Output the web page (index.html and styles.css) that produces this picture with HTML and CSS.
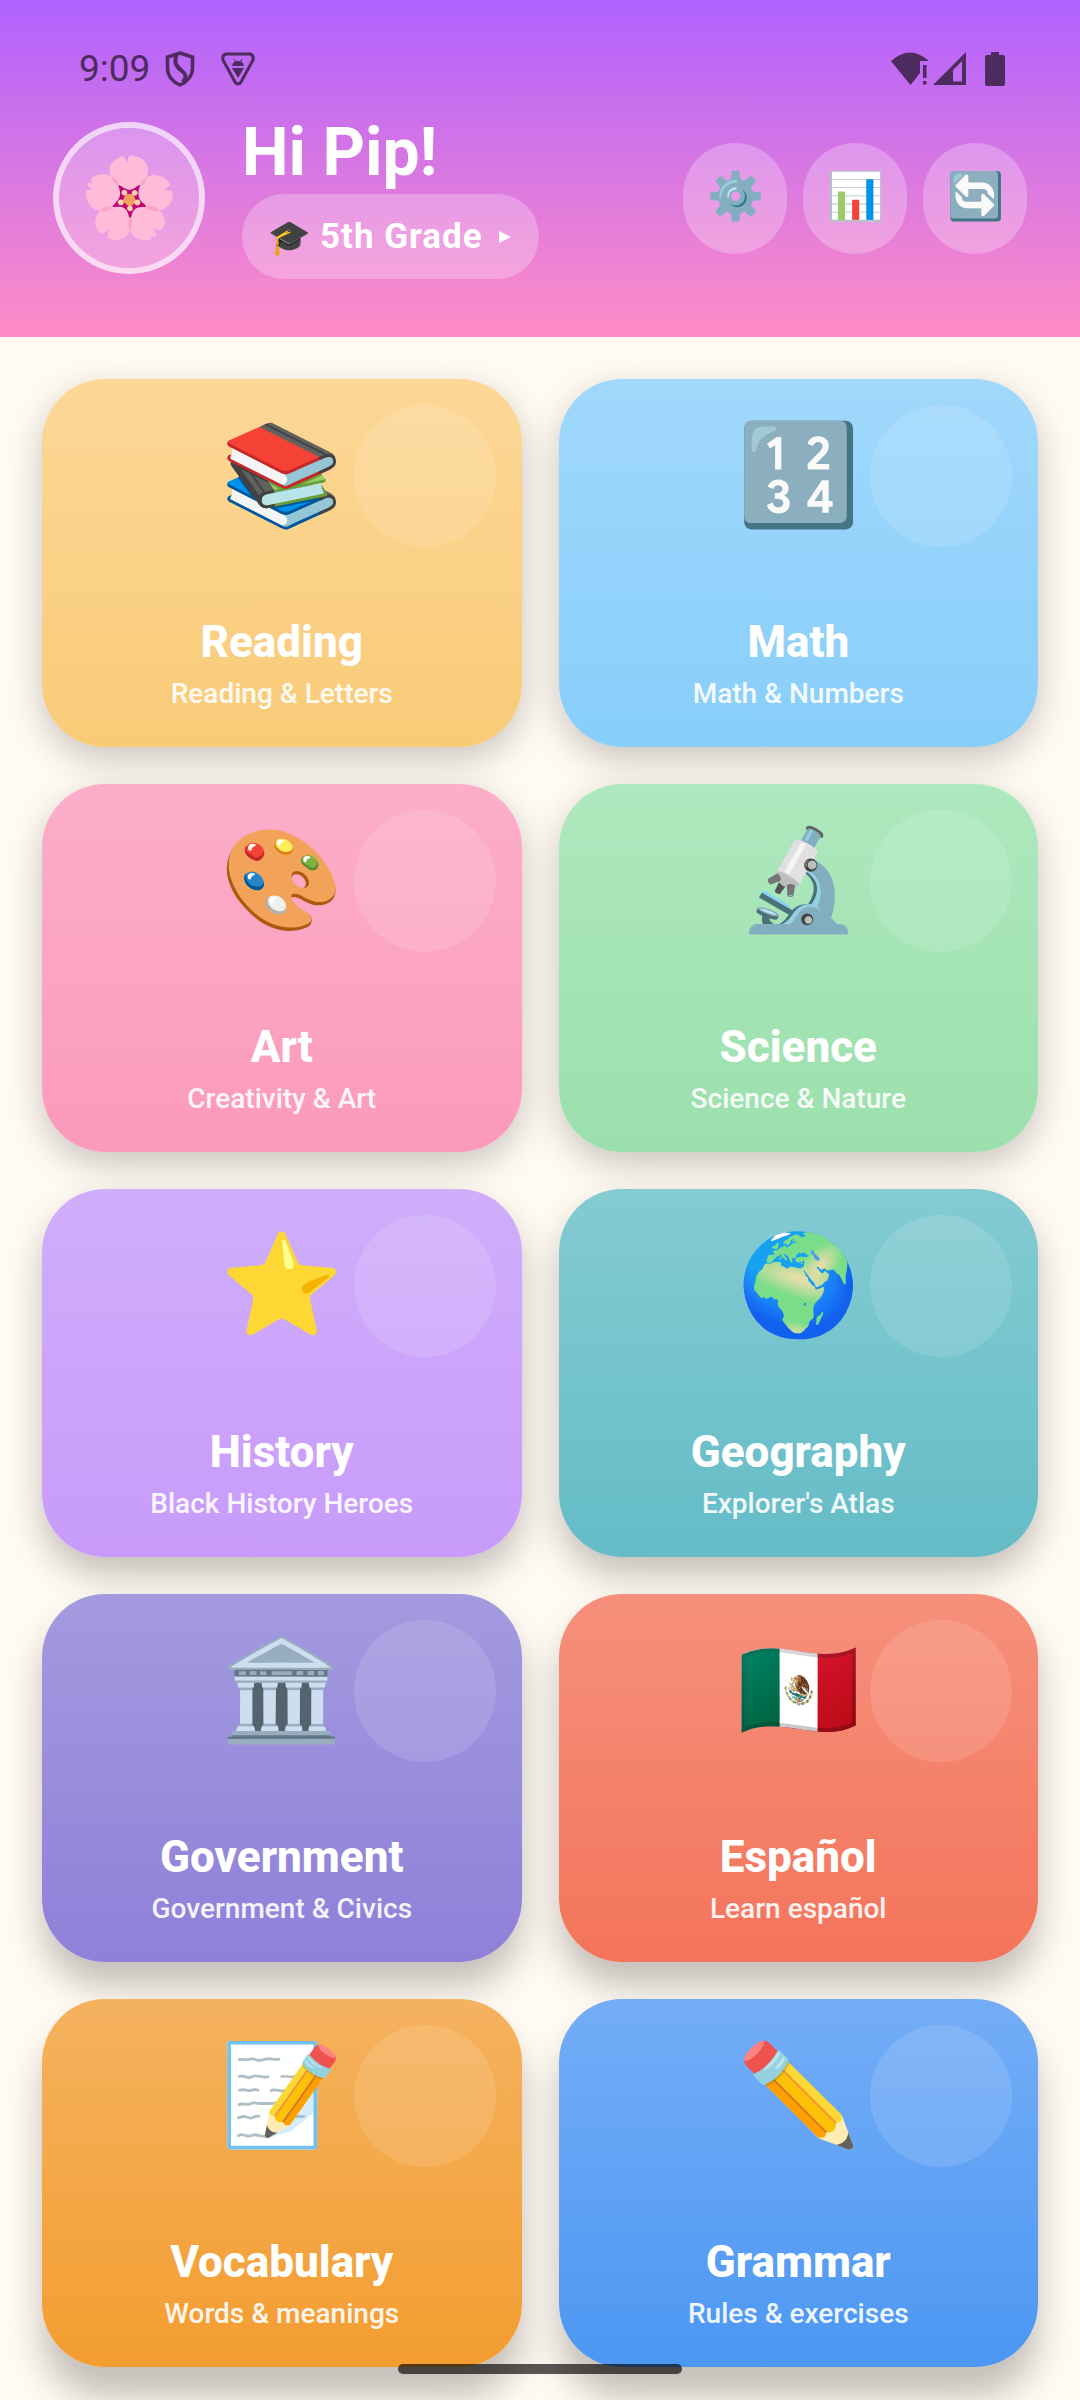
FILE: index.html
```
<!DOCTYPE html>
<html lang="en">
  <head>
    <meta charset="utf-8">
    <title>Learning Home</title>
    <link rel="stylesheet" href="styles.css">
  </head>
  <body>
    <header class="header">
      <div class="status-bar">
        <span class="clock">9:09</span>
        <svg class="shield" viewBox="0 0 30 36"><path d="M15 2 L27.500 6 V17 C27.500 25 22 31 15 34 C8 31 2.500 25 2.500 17 V6 Z" fill="none" stroke="currentColor" stroke-width="3.500"/><path d="M12 3 C8 12 12 16 17 20 C21 23 22 26 18 31" fill="none" stroke="currentColor" stroke-width="4"/></svg>
        <svg class="triangle" viewBox="0 0 34 34"><path d="M5 2 H29 Q33 3 32 8 L20 30 Q17 34 14 30 L2 8 Q1 3 5 2 Z" fill="none" stroke="currentColor" stroke-width="3"/><path d="M11 14 Q12 9 17 9 Q22 9 23 14 Z M11 16 H23 L17 26 Z" fill="currentColor"/><path d="M13 7 L14.500 10 M21 7 L19.500 10" stroke="currentColor"/></svg>
        <div class="status-right">
          <svg class="wifi" viewBox="0 0 38 34"><path d="M0 9 Q19 -8 38 9 H29 V21 L19.500 33 Z" fill="currentColor"/><path d="M32 13 H35.500 V26 H32 Z M32 29 H35.500 V32.500 H32 Z" fill="currentColor"/></svg>
          <svg class="signal" viewBox="0 0 34 34"><path d="M33 0 V33 H0 Z M29 9 L20 18 V29.500 H29 Z" fill="currentColor" fill-rule="evenodd"/></svg>
          <svg class="battery" viewBox="0 0 20 34"><path d="M6 0 H14 V3 H18 Q20 3 20 5 V32 Q20 34 18 34 H2 Q0 34 0 32 V5 Q0 3 2 3 H6 Z" fill="currentColor"/></svg>
        </div>
      </div>

      <div class="profile">
        <button class="avatar" aria-label="Avatar">🌸</button>
        <div class="greeting">
          <h1 class="hello">Hi Pip!</h1>
          <button class="grade-button"><span class="cap">🎓</span>5th Grade<span class="arrow"></span></button>
        </div>
        <div class="actions">
          <button class="round-button" aria-label="Settings">⚙️</button>
          <button class="round-button" aria-label="Progress">📊</button>
          <button class="round-button" aria-label="Switch">🔄</button>
        </div>
      </div>
    </header>

    <main class="subjects">
      <button class="card reading"><span class="icon">📚</span><span class="name">Reading</span><span class="about">Reading &amp; Letters</span></button>
      <button class="card math"><span class="icon">🔢</span><span class="name">Math</span><span class="about">Math &amp; Numbers</span></button>
      <button class="card art"><span class="icon">🎨</span><span class="name">Art</span><span class="about">Creativity &amp; Art</span></button>
      <button class="card science"><span class="icon">🔬</span><span class="name">Science</span><span class="about">Science &amp; Nature</span></button>
      <button class="card history"><span class="icon">⭐</span><span class="name">History</span><span class="about">Black History Heroes</span></button>
      <button class="card geography"><span class="icon">🌍</span><span class="name">Geography</span><span class="about">Explorer's Atlas</span></button>
      <button class="card government"><span class="icon">🏛️</span><span class="name">Government</span><span class="about">Government &amp; Civics</span></button>
      <button class="card spanish"><span class="icon">🇲🇽</span><span class="name">Español</span><span class="about">Learn español</span></button>
      <button class="card vocabulary"><span class="icon">📝</span><span class="name">Vocabulary</span><span class="about">Words &amp; meanings</span></button>
      <button class="card grammar"><span class="icon">✏️</span><span class="name">Grammar</span><span class="about">Rules &amp; exercises</span></button>
    </main>

    <div class="home-bar"></div>
  </body>
</html>
```
FILE: styles.css
```
* {
  box-sizing: border-box;
}

body {
  margin: 0;
  background-color: #fffaf2;
  color: white;
  font-family: Roboto, sans-serif;
}

button {
  border: none;
  padding: 0;
  color: white;
  font-family: inherit;
  cursor: pointer;
}

.header {
  padding: 0 53px 58px;
  background: linear-gradient(#b062ff, #ff8cc6);
}

.status-bar {
  display: flex;
  align-items: center;
  height: 117px;
  padding: 38px 22px 18px 26px;
  color: #4d2b5e;
}

.clock {
  font-size: 37px;
}

.shield {
  width: 30px;
  height: 36px;
  margin-left: 15px;
}

.triangle {
  width: 34px;
  height: 34px;
  margin-left: 26px;
}

.status-right {
  display: flex;
  margin-left: auto;
}

.wifi {
  width: 38px;
  height: 34px;
}

.signal {
  width: 34px;
  height: 34px;
  margin: 0 18px 0 4px;
}

.battery {
  width: 20px;
  height: 34px;
}

.profile {
  display: flex;
  align-items: center;
}

.avatar {
  display: flex;
  align-items: center;
  justify-content: center;
  width: 152px;
  height: 152px;
  border: 6px solid rgba(255, 255, 255, 0.7);
  border-radius: 50%;
  background: rgba(255, 255, 255, 0.25);
  background-clip: padding-box;
  font-size: 79px;
}

.greeting {
  margin-left: 37px;
}

.hello {
  margin: 0 0 5px;
  font-size: 66px;
  line-height: 72px;
}

.grade-button {
  display: flex;
  align-items: center;
  height: 85px;
  padding: 0 28px 0 26px;
  border-radius: 42px;
  background: rgba(255, 255, 255, 0.25);
  font-size: 35px;
  font-weight: bold;
  letter-spacing: 1px;
}

.cap {
  margin-right: 9px;
  font-size: 34px;
}

.arrow {
  margin-left: 16px;
  border: 6px solid transparent;
  border-left: 12px solid white;
  border-right: none;
}

.actions {
  display: flex;
  gap: 16px;
  margin-left: auto;
}

.round-button {
  width: 104px;
  height: 111px;
  padding-bottom: 4px;
  border-radius: 52px;
  background: rgba(255, 255, 255, 0.25);
  font-size: 46px;
}

.subjects {
  display: grid;
  grid-template-columns: 1fr 1fr;
  gap: 37px;
  padding: 42px 42px 33px;
}

.card {
  position: relative;
  display: flex;
  flex-direction: column;
  align-items: center;
  height: 368px;
  padding-bottom: 36px;
  border-radius: 63px;
  box-shadow: 0 12px 36px rgba(0, 0, 0, 0.22);
}

/* shadows get longer down the page */
.history,
.geography {
  box-shadow: 0 18px 36px rgba(0, 0, 0, 0.24);
}

.government,
.spanish {
  box-shadow: 0 24px 36px rgba(0, 0, 0, 0.24);
}

.vocabulary,
.grammar {
  box-shadow: 0 30px 36px rgba(0, 0, 0, 0.24);
}

/* soft bubble in the corner of each card */
.card::before {
  content: '';
  position: absolute;
  top: 26px;
  right: 26px;
  width: 142px;
  height: 142px;
  border-radius: 50%;
  background: rgba(255, 255, 255, 0.12);
}

.icon {
  position: relative;
  margin-top: 36px;
  font-size: 99px;
  line-height: 120px;
}

.name {
  margin-top: auto;
  margin-bottom: 8px;
  font-size: 44px;
  font-weight: 800;
  line-height: 53px;
}

.about {
  font-size: 28px;
  font-weight: 500;
  line-height: 34px;
  opacity: 0.9;
}

.reading {
  background: linear-gradient(#fcd797, #f9cb78);
}

.math {
  background: linear-gradient(#a1d8fc, #87cefa);
}

.art {
  background: linear-gradient(#fcaec9, #fb9abb);
}

.science {
  background: linear-gradient(#aee8be, #9be0ac);
}

.history {
  background: linear-gradient(#d0aefb, #c89bfa);
}

.geography {
  background: linear-gradient(#84cbd2, #64bcc7);
}

.government {
  background: linear-gradient(#a39adf, #8f80d9);
}

.spanish {
  background: linear-gradient(#f6907b, #f4745b);
}

.vocabulary {
  background: linear-gradient(#f5b25f, #f39d30);
}

.grammar {
  background: linear-gradient(#74adf7, #4c97f2);
}

.home-bar {
  position: fixed;
  bottom: 26px;
  left: 50%;
  width: 284px;
  height: 10px;
  margin-left: -142px;
  border-radius: 5px;
  background: rgba(0, 0, 0, 0.65);
}
```
